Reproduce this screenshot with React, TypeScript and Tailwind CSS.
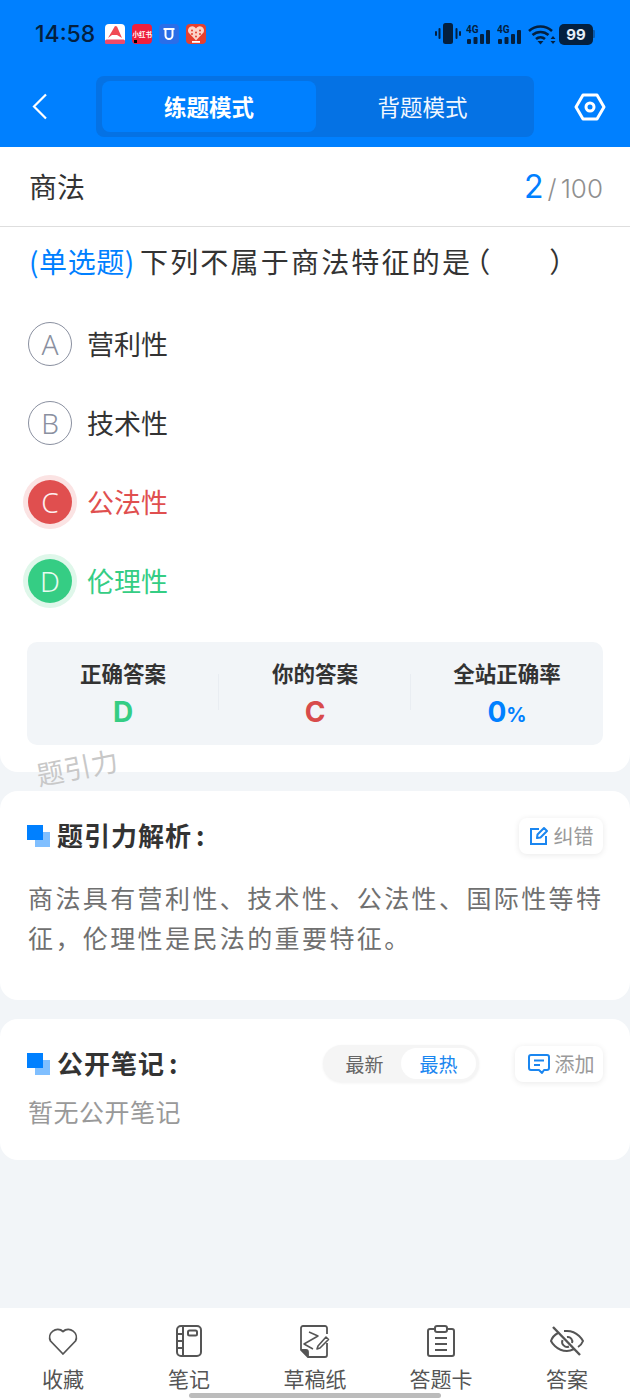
import React from "react";

const CJK = "font-['Noto_Sans_CJK_SC','Noto_Sans',sans-serif]";

function Option({ letter, text, state }: { letter: string; text: string; state?: "wrong" | "right" }) {
  const circle =
    state === "wrong"
      ? "bg-[#e04f4f] text-[#fdeeee] ring-[5px] ring-[#fbe3e3]"
      : state === "right"
        ? "bg-[#35cd84] text-[#e8fbf1] ring-[5px] ring-[#dff7ea]"
        : "border-[1.5px] border-[#8a90a0] text-[#8a90a0]";
  const label = state === "wrong" ? "text-[#e04f4f]" : state === "right" ? "text-[#35cd84]" : "text-[#333333]";
  return (
    <div className="flex h-[79px] items-center pl-[28px]">
      <div className={`flex h-[44px] w-[44px] items-center justify-center rounded-full font-['Noto_Sans',sans-serif] text-[28px] font-light leading-none ${circle}`}>
        {letter}
      </div>
      <div className={`ml-[15px] text-[27px] leading-none ${label}`}>{text}</div>
    </div>
  );
}

function Stat({ title, children, divider }: { title: string; children: React.ReactNode; divider?: boolean }) {
  return (
    <div className="relative flex flex-1 flex-col items-center pt-[18px]">
      <div className="text-[21.5px] font-bold leading-[26px] text-[#333333]">{title}</div>
      <div className="mt-[10px] font-['Inter',sans-serif] text-[28px] font-bold leading-[32px]">{children}</div>
      {divider && <div className="absolute right-0 top-[32px] h-[36px] w-px bg-[#e9edf2]" />}
    </div>
  );
}

function SectionTitle({ text }: { text: string }) {
  return (
    <div className="flex items-center">
      <div className="relative h-[22px] w-[23px]">
        <div className="absolute bottom-0 right-0 h-[15px] w-[15px] bg-[#80bfff]" />
        <div className="absolute left-0 top-0 h-[15px] w-[16px] bg-[#0080ff]" />
      </div>
      <div className="mb-[2px] ml-[7px] text-[26px] font-bold leading-none tracking-[1px] text-[#333333]">
        {text}
        <span className="ml-[4px]">:</span>
      </div>
    </div>
  );
}

function ChipButton({ icon, text, wide }: { icon: React.ReactNode; text: string; wide?: boolean }) {
  return (
    <div className={`flex h-[36px] items-center justify-center gap-[5px] rounded-[8px] bg-white shadow-[0_1px_6px_rgba(0,0,0,0.09)] ${wide ? "w-[88px] pl-[4px]" : "w-[84px]"}`}>
      {icon}
      <span className="text-[20px] leading-none text-[#9a9a9a]">{text}</span>
    </div>
  );
}

function NavItem({ icon, text }: { icon: React.ReactNode; text: string }) {
  return (
    <div className="flex w-[126px] flex-col items-center">
      <div className="flex h-[36px] items-center justify-center">{icon}</div>
      <div className="mt-[5px] text-[21px] leading-[28px] text-[#555555]">{text}</div>
    </div>
  );
}

function AppBadges() {
  return (
    <div className="ml-[10px] flex items-center gap-[7px]">
      {/* finance app */}
      <svg width="20" height="20" viewBox="0 0 20 20">
        <rect width="20" height="20" rx="4" fill="#fff" />
        <path d="M3 14 L10 2 L12 2.5 L17 14 L12 11 L7 11Z" fill="#f04a55" />
        <rect x="0" y="15.5" width="20" height="4.5" rx="1.5" fill="#ef4a6a" />
      </svg>
      {/* 小红书 */}
      <div className="relative flex h-[20px] w-[20px] items-center justify-center rounded-[4px] bg-[#ee1f3d]">
        <span className="text-[6.5px] font-bold leading-none text-white">小红书</span>
        <span className="absolute bottom-[1px] left-[2px] h-[3px] w-[3px] bg-black" />
      </div>
      {/* shield app */}
      <svg width="20" height="20" viewBox="0 0 20 20">
        <rect width="20" height="20" rx="4" fill="#2a6ee8" />
        <path d="M4.5 5 H15.5 M6.5 5 V11.5 A3.5 3.5 0 0 0 13.5 11.5 V5" fill="none" stroke="#fff" strokeWidth="2" />
      </svg>
      {/* heart app */}
      <svg width="20" height="20" viewBox="0 0 20 20">
        <rect width="20" height="20" rx="4" fill="#e5402f" />
        <path d="M10 16.5 L2.5 8.5 A4 4 0 0 1 10 4.5 A4 4 0 0 1 17.5 8.5Z" fill="#fbd4c8" />
        <g fill="#e5402f">
          <circle cx="6" cy="6.5" r="1" />
          <circle cx="14" cy="6.5" r="1" />
          <circle cx="10" cy="8.5" r="1" />
          <circle cx="6" cy="10" r="1" />
          <circle cx="14" cy="10" r="1" />
          <circle cx="10" cy="12.5" r="1" />
        </g>
        <rect x="6" y="17" width="8" height="1.8" fill="#fff" />
      </svg>
    </div>
  );
}

function StatusIcons() {
  const ink = "#04203f";
  const signal = (
    <svg width="25" height="21" viewBox="0 0 25 21">
      <text x="0" y="9" fontSize="10" fontWeight="700" fill={ink} fontFamily="Roboto, sans-serif">4G</text>
      <rect x="1" y="15" width="4" height="5" rx="1" fill={ink} />
      <rect x="7.5" y="13" width="4" height="7" rx="1" fill={ink} />
      <rect x="14" y="10" width="4" height="10" rx="1" fill={ink} />
      <rect x="20" y="6" width="4" height="14" rx="1" fill={ink} />
    </svg>
  );
  return (
    <div className="flex items-center">
      <svg width="26" height="22" viewBox="0 0 26 22" className="mr-[5px]">
        <rect x="8" y="0" width="10" height="21" rx="2.5" fill={ink} />
        <rect x="3.5" y="5" width="2" height="11" rx="1" fill={ink} />
        <rect x="0" y="8" width="2" height="5" rx="1" fill={ink} />
        <rect x="20.5" y="5" width="2" height="11" rx="1" fill={ink} />
        <rect x="24" y="8" width="2" height="5" rx="1" fill={ink} />
      </svg>
      <div className="flex gap-[6px]">
        {signal}
        {signal}
      </div>
      <svg width="28" height="21" viewBox="0 0 28 21" className="ml-[6px]">
        <path d="M1 7 A17 17 0 0 1 24 7" fill="none" stroke={ink} strokeWidth="2.6" />
        <path d="M4.5 11 A12 12 0 0 1 20.5 11" fill="none" stroke={ink} strokeWidth="2.6" />
        <path d="M8 15 A7 7 0 0 1 17 15" fill="none" stroke={ink} strokeWidth="2.6" />
        <path d="M12.5 20.5 L9.5 17 H15.5Z" fill={ink} />
        <path d="M25 12 L22.5 15 H27.5Z M25 20 L22.5 17 H27.5Z" fill={ink} />
      </svg>
      <div className="ml-[3px] flex h-[21px] w-[34px] items-center justify-center rounded-[5px] bg-[#04203f] font-['Inter',sans-serif] text-[15px] font-bold leading-none text-[#e6eef7]">
        99
      </div>
      <div className="h-[8px] w-[2px] rounded-r-[1px] bg-[#0a5bb0]" />
    </div>
  );
}

export default function App() {
  return (
    <div className={`relative flex min-h-[1400px] w-[630px] flex-col overflow-hidden bg-[#f2f5f8] ${CJK}`}>
      <header className="flex h-[147px] flex-col bg-[#0080ff]">
        <div className="flex h-[76px] items-start justify-between pl-[35px] pr-[35px] pt-[23px]">
          <div className="flex h-[22px] items-center">
            <span className="font-['Inter',sans-serif] text-[23px] font-medium leading-none text-[#04203f]">14:58</span>
            <AppBadges />
          </div>
          <StatusIcons />
        </div>
        <div className="flex items-start">
          <div className="flex h-[61px] w-[96px] items-center pl-[32px]">
            <svg width="16" height="27" viewBox="0 0 16 27" fill="none" stroke="#fff" strokeWidth="2.2">
              <path d="M14 1.5 L2 13.5 L14 25.5" />
            </svg>
          </div>
          <div className="flex h-[61px] w-[438px] rounded-[8px] bg-[#0572e4] py-[5px] pl-[6px] pr-[5px]">
            <div className="flex w-[214px] items-center justify-center rounded-[8px] bg-[#0080ff] text-[22.5px] font-bold text-white">练题模式</div>
            <div className="flex flex-1 items-center justify-center text-[22.5px] text-[#f1f7ff]">背题模式</div>
          </div>
          <div className="flex h-[61px] flex-1 items-center justify-center pl-[16px]">
            <svg width="32" height="28" viewBox="0 0 32 28" fill="none" stroke="#fff" strokeWidth="3">
              <path d="M9 2 H23 L30 14 L23 26 H9 L2 14Z" strokeLinejoin="round" />
              <circle cx="16" cy="14" r="4" />
            </svg>
          </div>
        </div>
      </header>

      <section className="relative rounded-b-[18px] bg-white pb-[27px]">
        <div className="flex h-[80px] items-center justify-between border-b border-[#dedede] pl-[29px] pr-[27px]">
          <span className="-mt-[2px] text-[28px] leading-none text-[#333333]">商法</span>
          <div className="flex items-baseline font-['Inter',sans-serif] text-[#8f8f8f]">
            <span className="text-[32px] font-normal leading-none text-[#0080ff]">2</span>
            <span className="ml-[4px] text-[26px] font-light leading-none">/</span>
            <span className="ml-[4px] text-[26px] font-light leading-none">100</span>
          </div>
        </div>
        <div className="pl-[29px] pt-[16px] text-[28px] leading-[36px] text-[#333333]">
          <span className="tracking-[0.6px] text-[#0080ff]">(单选题)</span>
          <span className="ml-[5px] tracking-[2.2px]">下列不属于商法特征的是</span>
          <span className="-ml-[10px] tracking-[1.9px]">（&nbsp;&nbsp;&nbsp;&nbsp;&nbsp;&nbsp;&nbsp;）</span>
        </div>
        <div className="mt-[25px]">
          <Option letter="A" text="营利性" />
          <Option letter="B" text="技术性" />
          <Option letter="C" text="公法性" state="wrong" />
          <Option letter="D" text="伦理性" state="right" />
        </div>
        <div className="mx-[27px] mt-[22px] flex h-[103px] rounded-[10px] bg-[#f2f5f8]">
          <Stat title="正确答案" divider>
            <span className="text-[#35cd84]">D</span>
          </Stat>
          <Stat title="你的答案" divider>
            <span className="text-[#d84b4b]">C</span>
          </Stat>
          <Stat title="全站正确率">
            <span className="text-[#0080ff]">0</span>
            <span className="text-[20px] text-[#0080ff]">%</span>
          </Stat>
        </div>
        <div className="absolute left-[36px] top-[606px] -rotate-[11deg] text-[27px] leading-none tracking-[0.5px] text-[#c8c8c8]">题引力</div>
      </section>

      <section className="mt-[19px] h-[209px] rounded-[18px] bg-white pl-[27px] pr-[27px] pt-[27px]">
        <div className="flex items-center justify-between">
          <SectionTitle text="题引力解析" />
          <ChipButton
            text="纠错"
            icon={
              <svg width="20" height="20" viewBox="0 0 20 20" fill="none" stroke="#1a86f0" strokeWidth="2">
                <path d="M10 3 H2 V18 H17 V10" />
                <path d="M8 12 L8.5 8.5 L15 2 L18 5 L11.5 11.5Z" strokeLinejoin="round" />
              </svg>
            }
          />
        </div>
        <p className="-mr-[4px] mt-[23px] pl-[1px] text-[25px] leading-[40px] tracking-[2.4px] text-[#707070]">
          商法具有营利性、技术性、公法性、国际性等特征，伦理性是民法的重要特征。
        </p>
      </section>

      <section className="mt-[19px] h-[141px] rounded-[18px] bg-white px-[27px] pt-[26px]">
        <div className="flex items-center">
          <SectionTitle text="公开笔记" />
          <div className="ml-auto flex h-[37px] w-[156px] items-center rounded-full bg-[#f5f5f5] p-[3px] shadow-[0_1px_3px_rgba(0,0,0,0.06)]">
            <span className="flex-1 pl-[2px] text-center text-[19px] leading-none text-[#666666]">最新</span>
            <span className="flex h-full w-[75px] items-center justify-center rounded-full bg-white text-[19px] leading-none text-[#1a86f0]">最热</span>
          </div>
          <div className="ml-[36px]">
            <ChipButton
              wide
              text="添加"
              icon={
                <svg width="22" height="22" viewBox="0 0 22 22" fill="none" stroke="#1a86f0" strokeWidth="2">
                  <path d="M3 2 H19 A2 2 0 0 1 21 4 V15 A2 2 0 0 1 19 17 H16 L14 20 L11 17 H3 A2 2 0 0 1 1 15 V4 A2 2 0 0 1 3 2Z" strokeLinejoin="round" />
                  <path d="M6 7.5 H16 M6 12 H12" />
                </svg>
              }
            />
          </div>
        </div>
        <p className="mt-[11px] pl-[1px] text-[25px] leading-[36px] tracking-[0.5px] text-[#999999]">暂无公开笔记</p>
      </section>

      <div className="flex-1" />

      <nav className="flex h-[92px] bg-white pt-[15px]">
        <NavItem
          text="收藏"
          icon={
            <svg width="32" height="30" viewBox="0 0 32 30" fill="none" stroke="#555" strokeWidth="1.8">
              <path d="M16 28 L3.5 15 A8 8 0 0 1 16 5.5 A8 8 0 0 1 28.5 15Z" strokeLinejoin="round" />
            </svg>
          }
        />
        <NavItem
          text="笔记"
          icon={
            <svg width="26" height="32" viewBox="0 0 26 32" fill="none" stroke="#555" strokeWidth="2">
              <rect x="1" y="1" width="24" height="30" rx="4" />
              <path d="M7 1 V31 M1 9 H7 M1 16 H7 M1 23 H7" />
              <rect x="12" y="5.5" width="9" height="5" rx="1.5" />
            </svg>
          }
        />
        <NavItem
          text="草稿纸"
          icon={
            <svg width="30" height="33" viewBox="0 0 30 33" fill="none" stroke="#555" strokeWidth="1.8">
              <path d="M27 9 V3 A2 2 0 0 0 25 1 H3 A2 2 0 0 0 1 3 V25 L8 32 H25 A2 2 0 0 0 27 30 V18" />
              <path d="M1 25 H6 A2 2 0 0 1 8 27 V32" fill="#555" />
              <path d="M9 7 L18 11 L4 19 L13 24" strokeWidth="1.5" strokeLinejoin="round" />
              <path d="M17 24 L18 21 L26 12 L28.5 14.5 L20 23Z" strokeLinejoin="round" strokeWidth="1.6" />
            </svg>
          }
        />
        <NavItem
          text="答题卡"
          icon={
            <svg width="28" height="32" viewBox="0 0 28 32" fill="none" stroke="#555" strokeWidth="2">
              <path d="M7 4 H3 A2 2 0 0 0 1 6 V29 A2 2 0 0 0 3 31 H25 A2 2 0 0 0 27 29 V6 A2 2 0 0 0 25 4 H21" />
              <rect x="8" y="1" width="12" height="6" rx="2" />
              <path d="M8 13 H20 M8 19 H20 M8 25 H20" />
            </svg>
          }
        />
        <NavItem
          text="答案"
          icon={
            <svg width="34" height="30" viewBox="0 0 34 30" fill="none" stroke="#555" strokeWidth="2">
              <path d="M8 7 C2.5 10 1 15 1 15 C1 15 6 25 17 25 C20 25 22 24 24 23 M14 5 C15 5 16 5 17 5 C28 5 33 15 33 15 C33 15 31.5 19 28 21" />
              <path d="M17 11 A4.5 4.5 0 0 1 22 17 M12.5 14 A5 5 0 0 0 19 20.5" />
              <path d="M3 1 L30 29" strokeWidth="2.4" />
            </svg>
          }
        />
      </nav>
      <div className="absolute bottom-[2px] left-[189px] h-[5px] w-[252px] rounded-full bg-[#bcbcbc]" />
    </div>
  );
}
